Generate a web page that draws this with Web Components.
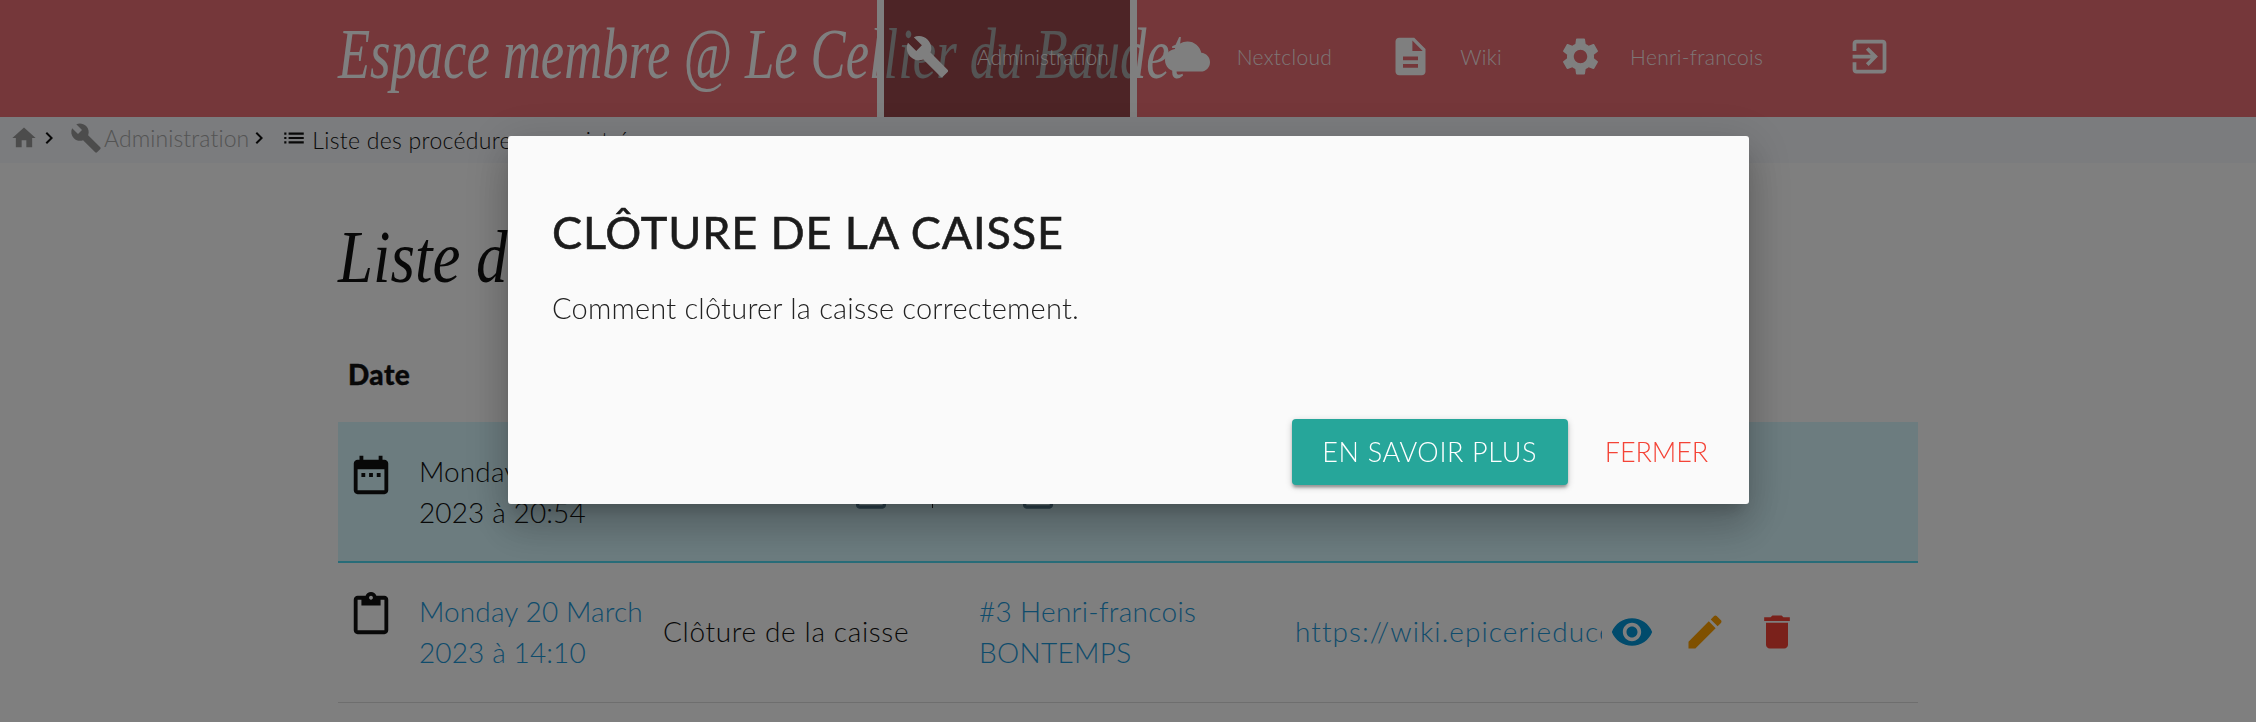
<!DOCTYPE html>
<html lang="fr">
<head>
<meta charset="utf-8">
<title>Espace membre</title>
<style>
	html, body { margin: 0; padding: 0; background: #fff; }
	body { font-family: "Lato", "Noto Sans", sans-serif; font-weight: 300; color: #111; overflow: hidden; height: 722px; }
</style>
</head>
<body>
<app-navbar>
	<nav-item icon="build" active>Administration</nav-item>
	<nav-item icon="cloud">Nextcloud</nav-item>
	<nav-item icon="description">Wiki</nav-item>
	<nav-item icon="settings">Henri-francois</nav-item>
	<nav-item icon="exit" class="logout"></nav-item>
</app-navbar>
<app-breadcrumb></app-breadcrumb>
<page-content>
	<list-header></list-header>
	<list-row variant="info" icon="event">
		<span slot="date">Monday 20 March<br>2023 à 20:54</span>
	</list-row>
	<list-row icon="paste" link>
		<span slot="date">Monday 20 March<br>2023 à 14:10</span>
		<span slot="name">Clôture de la caisse</span>
		<span slot="author">#3 Henri-francois<br>BONTEMPS</span>
		<span slot="url">https://wiki.epicerieducellierdubaudet.fr/caisse</span>
	</list-row>
</page-content>
<modal-dialog>
	<span slot="title">CLÔTURE DE LA CAISSE</span>
	Comment clôturer la caisse correctement.
</modal-dialog>

<script>
const ICONS = {
	home: 'M10 20v-6h4v6h5v-8h3L12 3 2 12h3v8z',
	chevron: 'M10 6L8.59 7.41 13.17 12l-4.58 4.59L10 18l6-6z',
	build: 'M22.7 19l-9.1-9.1c.9-2.3.4-5-1.5-6.9-2-2-5-2.4-7.4-1.3L9 6 6 9 1.6 4.7C.4 7.1.9 10.1 2.9 12.1c1.9 1.9 4.6 2.4 6.9 1.5l9.1 9.1c.4.4 1 .4 1.4 0l2.3-2.3c.5-.4.5-1.1.1-1.4z',
	cloud: 'M19.35 10.04C18.67 6.59 15.64 4 12 4 9.11 4 6.6 5.64 5.35 8.04 2.34 8.36 0 10.91 0 14c0 3.31 2.69 6 6 6h13c2.76 0 5-2.24 5-5 0-2.64-2.05-4.78-4.65-4.96z',
	description: 'M14 2H6c-1.1 0-1.99.9-1.99 2L4 20c0 1.1.89 2 1.99 2H18c1.1 0 2-.9 2-2V8l-6-6zm2 16H8v-2h8v2zm0-4H8v-2h8v2zm-3-5V3.5L18.5 9H13z',
	settings: 'M19.14 12.94c.04-.3.06-.61.06-.94 0-.32-.02-.64-.07-.94l2.03-1.58c.18-.14.23-.41.12-.61l-1.92-3.32c-.12-.22-.37-.29-.59-.22l-2.39.96c-.5-.38-1.03-.7-1.62-.94l-.36-2.54c-.04-.24-.24-.41-.48-.41h-3.84c-.24 0-.43.17-.47.41l-.36 2.54c-.59.24-1.13.57-1.62.94l-2.39-.96c-.22-.08-.47 0-.59.22L2.74 8.87c-.12.21-.08.47.12.61l2.03 1.58c-.05.3-.09.63-.09.94s.02.64.07.94l-2.03 1.58c-.18.14-.23.41-.12.61l1.92 3.32c.12.22.37.29.59.22l2.39-.96c.5.38 1.03.7 1.62.94l.36 2.54c.05.24.24.41.48.41h3.84c.24 0 .44-.17.47-.41l.36-2.54c.59-.24 1.13-.56 1.62-.94l2.39.96c.22.08.47 0 .59-.22l1.92-3.32c.12-.22.07-.47-.12-.61l-2.01-1.58zM12 15.6c-1.98 0-3.6-1.62-3.6-3.6s1.62-3.6 3.6-3.6 3.6 1.62 3.6 3.6-1.62 3.6-3.6 3.6z',
	exit: 'M10.09 15.59L11.5 17l5-5-5-5-1.41 1.41L12.67 11H3v2h9.67l-2.58 2.59zM19 3H5c-1.11 0-2 .9-2 2v4h2V5h14v14H5v-4H3v4c0 1.1.89 2 2 2h14c1.1 0 2-.9 2-2V5c0-1.1-.9-2-2-2z',
	list: 'M3 13h2v-2H3v2zm0 4h2v-2H3v2zm0-8h2V7H3v2zm4 4h14v-2H7v2zm0 4h14v-2H7v2zM7 7v2h14V7H7z',
	event: 'M9 11H7v2h2v-2zm4 0h-2v2h2v-2zm4 0h-2v2h2v-2zm2-7h-1V2h-2v2H8V2H6v2H5c-1.11 0-1.99.9-1.99 2L3 20c0 1.1.89 2 2 2h14c1.1 0 2-.9 2-2V6c0-1.1-.9-2-2-2zm0 16H5V9h14v11z',
	paste: 'M19 2h-4.18C14.4.84 13.3 0 12 0c-1.3 0-2.4.84-2.82 2H5c-1.1 0-2 .9-2 2v16c0 1.1.9 2 2 2h14c1.1 0 2-.9 2-2V4c0-1.1-.9-2-2-2zm-7 0c.55 0 1 .45 1 1s-.45 1-1 1-1-.45-1-1 .45-1 1-1zm7 18H5V4h2v3h10V4h2v16z',
	eye: 'M12 4.5C7 4.5 2.73 7.61 1 12c1.73 4.39 6 7.5 11 7.5s9.27-3.11 11-7.5c-1.73-4.39-6-7.5-11-7.5zM12 17c-2.76 0-5-2.24-5-5s2.24-5 5-5 5 2.24 5 5-2.24 5-5 5zm0-8c-1.66 0-3 1.34-3 3s1.34 3 3 3 3-1.34 3-3-1.34-3-3-3z',
	edit: 'M3 17.25V21h3.75L17.81 9.94l-3.75-3.75L3 17.25zM20.71 7.04c.39-.39.39-1.02 0-1.41l-2.34-2.34c-.39-.39-1.02-.39-1.41 0l-1.83 1.83 3.75 3.75 1.83-1.83z',
	trash: 'M6 19c0 1.1.9 2 2 2h8c1.1 0 2-.9 2-2V7H6v12zM19 4h-3.5l-1-1h-5l-1 1H5v2h14V4z'
};

class MatIcon extends HTMLElement {
	connectedCallback() {
		const size = this.getAttribute('size') || 24;
		this.attachShadow({ mode: 'open' }).innerHTML = `
			<style>
				:host { display: inline-flex; flex: none; width: ${size}px; height: ${size}px; }
				svg { width: 100%; height: 100%; fill: currentColor; display: block; }
			</style>
			<svg viewBox="0 0 24 24"><path d="${ICONS[this.getAttribute('name')]}"></path></svg>`;
	}
}
customElements.define('mat-icon', MatIcon);

class AppNavbar extends HTMLElement {
	constructor() {
		super();
		this.attachShadow({ mode: 'open' }).innerHTML = `
			<style>
				:host { display: block; position: relative; height: 117px; background: #ea6e74; color: #fff; }
				.brand {
					position: absolute; left: 338px; top: 0;
					font: italic 400 72px/108px "Liberation Serif", serif;
					white-space: nowrap; transform: scaleX(.73); transform-origin: left center;
				}
				nav { display: flex; height: 100%; padding-left: 877px; position: relative; }
			</style>
			<div class="brand">Espace membre @ Le Cellier du Baudet</div>
			<nav><slot></slot></nav>`;
	}
}
customElements.define('app-navbar', AppNavbar);

class NavItem extends HTMLElement {
	connectedCallback() {
		const icon = this.getAttribute('icon');
		this.attachShadow({ mode: 'open' }).innerHTML = `
			<style>
				:host {
					display: flex; align-items: center; box-sizing: border-box; height: 117px;
					padding: 0 21px 4px; border: solid transparent; border-width: 0 7px;
					font-size: 21px; font-weight: 300; letter-spacing: .3px; color: rgba(255,255,255,.88);
				}
				:host([active]) { background: rgba(0,0,0,.34); background-clip: padding-box; border-color: #fff; letter-spacing: 0; }
				:host(.logout) { margin-left: 28px; }
				mat-icon { margin-right: 27px; color: #fff; }
				:host(.logout) mat-icon { margin-right: 0; }
			</style>
			<mat-icon name="${icon}" size="45"></mat-icon><slot></slot>`;
	}
}
customElements.define('nav-item', NavItem);

class AppBreadcrumb extends HTMLElement {
	constructor() {
		super();
		this.attachShadow({ mode: 'open' }).innerHTML = `
			<style>
				:host {
					display: flex; align-items: center; height: 46px; box-sizing: border-box;
					padding: 0 0 5px 10px; background: #f6f8fc; font-size: 23px; color: #111;
				}
				.sep { margin: 0 1px 0 -1px; }
				.muted { color: #a8a8a8; margin: 0 -1px 0 2px; letter-spacing: .1px; }
				.build { margin-left: 8px; color: #999; }
				.home { color: #999; }
				.current { margin-left: 5px; letter-spacing: .3px; padding-top: 5px; }
				.list { margin-left: 9px; }
			</style>
			<mat-icon class="home" name="home" size="28"></mat-icon>
			<mat-icon class="sep" name="chevron" size="24"></mat-icon>
			<mat-icon class="build" name="build" size="32"></mat-icon>
			<span class="muted">Administration</span>
			<mat-icon class="sep" name="chevron" size="24"></mat-icon>
			<mat-icon class="list" name="list" size="26"></mat-icon>
			<span class="current">Liste des procédures enregistrées</span>`;
	}
}
customElements.define('app-breadcrumb', AppBreadcrumb);

class PageContent extends HTMLElement {
	constructor() {
		super();
		this.attachShadow({ mode: 'open' }).innerHTML = `
			<style>
				:host { display: block; margin: 0 338px; }
				h1 {
					margin: 0; height: 180px; box-sizing: border-box; padding-top: 54px;
					font: italic 400 74px/80px "Liberation Serif", serif; color: #111;
					transform: scaleX(.85); transform-origin: left center; white-space: nowrap;
				}
			</style>
			<h1>Liste des procédures</h1>
			<slot></slot>`;
	}
}
customElements.define('page-content', PageContent);

class ListHeader extends HTMLElement {
	constructor() {
		super();
		this.attachShadow({ mode: 'open' }).innerHTML = `
			<style>
				:host { display: block; height: 79px; padding-left: 10px; box-sizing: border-box; font: 900 28px/62px "Lato", sans-serif; color: #111; letter-spacing: .4px; -webkit-text-stroke: .4px #111; }
			</style>
			Date`;
	}
}
customElements.define('list-header', ListHeader);

class ListRow extends HTMLElement {
	connectedCallback() {
		const info = this.getAttribute('variant') === 'info';
		const link = this.hasAttribute('link');
		this.attachShadow({ mode: 'open' }).innerHTML = `
			<style>
				:host {
					display: grid; grid-template-columns: 82px 244px 316px 315px 320px 1fr; align-items: center;
					height: 140px; box-sizing: border-box; padding-bottom: 2px; border-bottom: 1px solid #dcdcdc;
					font-size: 28px; line-height: 41px; color: #111;
				}
				:host([variant="info"]) { background: #d8f8ff; border-bottom: 2px solid #50d8f0; height: 141px; padding-bottom: 0; }
				mat-icon.lead { margin-left: 10px; margin-top: -33px; }
				.date { letter-spacing: .12px; margin-left: -1px; }
				.name { letter-spacing: .65px; margin-left: -1px; }
				.link { color: #1e98d8; }
				.author { letter-spacing: .3px; margin-left: -1px; }
				.url { color: #1e98d8; overflow: hidden; white-space: nowrap; width: 307px; letter-spacing: 1.05px; }
				.actions { display: flex; align-items: center; margin-left: -5px; }
				.eye { color: #0297d9; margin-right: 29px; }
				.edit { color: #ffa000; margin-right: 28px; }
				.trash { color: #f44336; }
				.peek { display: flex; }
				.peek mat-icon { color: #5a8296; }
				.tick { width: 1px; height: 4px; margin: 32px 0 0 41px; background: #222; }
			</style>
			<mat-icon class="lead" name="${this.getAttribute('icon')}" size="46"></mat-icon>
			<div class="date ${link ? 'link' : ''}"><slot name="date"></slot></div>
			${info ? `
				<div class="peek" style="padding-left:187px"><mat-icon name="event" size="40"></mat-icon><span class="tick"></span></div>
				<div class="peek" style="padding-left:38px"><mat-icon name="event" size="40"></mat-icon></div>
			` : `
				<div class="name"><slot name="name"></slot></div>
				<div class="author link"><slot name="author"></slot></div>
				<div class="url"><slot name="url"></slot></div>
				<div class="actions">
					<mat-icon class="eye" name="eye" size="44"></mat-icon>
					<mat-icon class="edit" name="edit" size="44"></mat-icon>
					<mat-icon class="trash" name="trash" size="44"></mat-icon>
				</div>
			`}`;
	}
}
customElements.define('list-row', ListRow);

class ModalDialog extends HTMLElement {
	constructor() {
		super();
		this.attachShadow({ mode: 'open' }).innerHTML = `
			<style>
				:host { display: block; position: fixed; inset: 0; background: rgba(0, 0, 0, .5); }
				.modal {
					position: absolute; left: 508px; top: 136px; width: 1241px; height: 368px;
					display: flex; flex-direction: column; box-sizing: border-box;
					background: #fafafa; border-radius: 3px;
					box-shadow: 0 24px 38px 3px rgba(0,0,0,.14), 0 9px 46px 8px rgba(0,0,0,.12), 0 11px 15px -7px rgba(0,0,0,.2);
				}
				.content { flex: 1; padding: 65px 44px 0; }
				h4 { margin: 0 0 25px; font: 400 45px/62px "Lato", sans-serif; color: #1c1c1c; letter-spacing: .85px; -webkit-text-stroke: .6px #1c1c1c; }
				p { margin: 0; font-size: 29px; line-height: 40px; color: #222; letter-spacing: .2px; }
				footer { display: flex; justify-content: flex-end; align-items: center; height: 85px; padding: 0 41px 19px 0; box-sizing: border-box; }
				button {
					font: 300 27px/66px "Lato", sans-serif; border: 0; cursor: pointer; padding: 0; background: none;
				}
				.primary { width: 276px; height: 66px; background: #26a69a; color: #fff; border-radius: 4px; margin-right: 37px; letter-spacing: .65px;
					box-shadow: 0 3px 3px rgba(0,0,0,.2), 0 4px 2px -2px rgba(0,0,0,.12), 0 2px 7px rgba(0,0,0,.2); }
				.close { color: #f44336; letter-spacing: -.1px; }
			</style>
			<div class="modal">
				<div class="content">
					<h4><slot name="title"></slot></h4>
					<p><slot></slot></p>
				</div>
				<footer>
					<button class="primary">EN SAVOIR PLUS</button>
					<button class="close">FERMER</button>
				</footer>
			</div>`;
	}
}
customElements.define('modal-dialog', ModalDialog);
</script>
</body>
</html>
